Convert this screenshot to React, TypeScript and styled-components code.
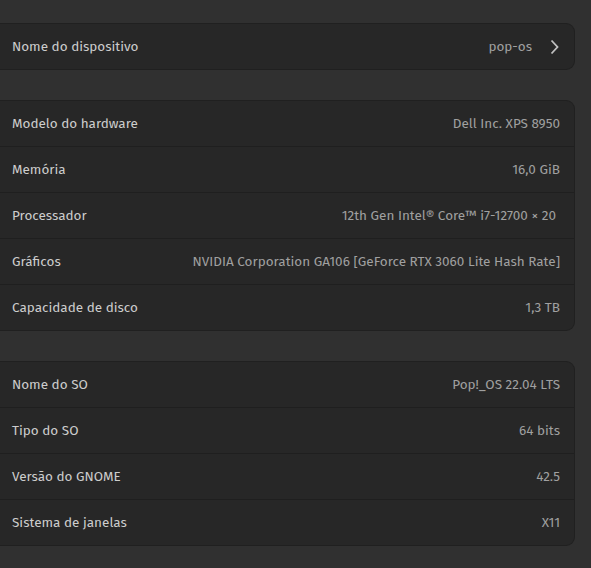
import React from "react";
import styled, { createGlobalStyle } from "styled-components";

const Global = createGlobalStyle`
  html, body {
    margin: 0;
    padding: 0;
    background: #303030;
  }
  body {
    font-family: "Fira Sans", "Noto Sans", sans-serif;
  }
`;

const Page = styled.div`
  display: flex;
  flex-direction: column;
  gap: 30px;
  width: 575px;
  padding-top: 23px;
`;

const Card = styled.div`
  background: #272727;
  border: 1px solid #202020;
  border-left: none;
  border-radius: 0 9px 9px 0;
  display: flex;
  flex-direction: column;
  overflow: hidden;
`;

const Row = styled.div`
  height: 45px;
  display: flex;
  align-items: center;
  justify-content: space-between;
  padding: 0 14px 0 12px;
  box-sizing: border-box;
  & + & {
    border-top: 1px solid #1f1f1f;
    height: 46px;
  }
`;

const Label = styled.span`
  font-size: 13.5px;
  color: #cdcdcd;
`;

const Value = styled.span<{ $trail?: boolean }>`
  font-size: 13.5px;
  color: #a0a0a0;
  display: flex;
  align-items: center;
  gap: 14px;
  margin-right: ${(p) => (p.$trail ? "4px" : "0")};
`;

const Chevron = () => (
  <svg width="16" height="16" viewBox="0 0 16 16" style={{ marginRight: -2 }}>
    <path d="M5.5 1.5 L11.5 8 L5.5 14.5" fill="none" stroke="#c0c0c0" strokeWidth="1.8" />
  </svg>
);

type Item = [string, string, boolean?];

const hardware: Item[] = [
  ["Modelo do hardware", "Dell Inc. XPS 8950"],
  ["Memória", "16,0 GiB"],
  ["Processador", "12th Gen Intel® Core™ i7-12700 × 20", true],
  ["Gráficos", "NVIDIA Corporation GA106 [GeForce RTX 3060 Lite Hash Rate]"],
  ["Capacidade de disco", "1,3 TB"],
];

const os: Item[] = [
  ["Nome do SO", "Pop!_OS 22.04 LTS"],
  ["Tipo do SO", "64 bits"],
  ["Versão do GNOME", "42.5"],
  ["Sistema de janelas", "X11"],
];

export default function App() {
  return (
    <>
      <Global />
      <Page>
        <Card>
          <Row>
            <Label>Nome do dispositivo</Label>
            <Value>
              pop-os
              <Chevron />
            </Value>
          </Row>
        </Card>
        <Card>
          {hardware.map(([l, v, t]) => (
            <Row key={l}>
              <Label>{l}</Label>
              <Value $trail={t}>{v}</Value>
            </Row>
          ))}
        </Card>
        <Card>
          {os.map(([l, v, t]) => (
            <Row key={l}>
              <Label>{l}</Label>
              <Value $trail={t}>{v}</Value>
            </Row>
          ))}
        </Card>
      </Page>
    </>
  );
}
